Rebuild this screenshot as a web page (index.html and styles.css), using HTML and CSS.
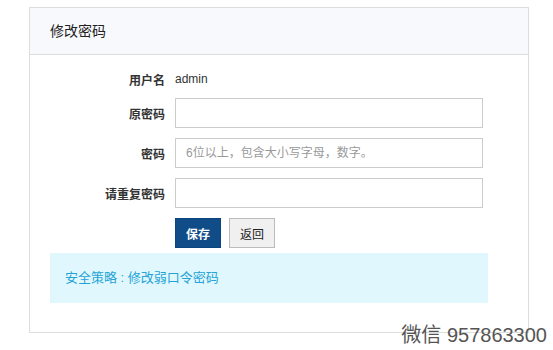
FILE: index.html
```html
<!DOCTYPE html>
<html lang="zh-CN">
  <head>
    <meta charset="UTF-8" />
    <title>修改密码</title>
    <link rel="stylesheet" href="styles.css">
  </head>
  <body>
    <div class="panel">
      <div class="panel-header">修改密码</div>
      <div class="panel-body">
        <div class="form-row static">
          <label class="form-label">用户名</label>
          <span class="form-value">admin</span>
        </div>
        <div class="form-row">
          <label class="form-label">原密码</label>
          <input class="form-input" type="password" />
        </div>
        <div class="form-row">
          <label class="form-label">密码</label>
          <input class="form-input" type="password" placeholder="6位以上，包含大小写字母，数字。" />
        </div>
        <div class="form-row">
          <label class="form-label">请重复密码</label>
          <input class="form-input" type="password" />
        </div>
        <div class="form-row actions">
          <span class="form-label"></span>
          <button class="btn btn-primary">保存</button>
          <button class="btn btn-default">返回</button>
        </div>
        <div class="notice">安全策略 : 修改弱口令密码</div>
      </div>
    </div>
    <div class="watermark">微信 957863300</div>
  </body>
</html>
```

FILE: styles.css
```css
* {
  margin: 0;
  padding: 0;
  box-sizing: border-box;
}

body {
  font-family: "Liberation Sans", "Noto Sans CJK SC", sans-serif;
  font-size: 12px;
  color: #333;
  background: #fff;
  padding: 7px 0 0 29px;
  height: 350px;
  position: relative;
  overflow: hidden;
}

.panel {
  width: 500px;
  border: 1px solid #ddd;
  background: #fff;
}

.panel-header {
  height: 47px;
  line-height: 46px;
  padding-left: 20px;
  font-size: 14px;
  color: #222;
  background: #f8f9fc;
  border-bottom: 1px solid #ddd;
}

.panel-body {
  padding: 14px 0 29px 20px;
}

.form-row {
  display: flex;
  align-items: center;
  height: 30px;
  margin-bottom: 10px;
}

.form-row.static {
  height: 20px;
  margin-bottom: 9px;
}

.form-label {
  width: 115px;
  margin-right: 10px;
  text-align: right;
  font-weight: 700;
  color: #333;
}

.form-value {
  color: #333;
}

.form-input {
  width: 308px;
  height: 30px;
  border: 1px solid #ccc;
  padding: 0 10px;
  font-family: inherit;
  font-size: 12px;
  color: #333;
  outline: none;
}

.form-input::placeholder {
  color: #999;
}

.actions {
  gap: 8px;
  margin-bottom: 5px;
}

.actions .form-label {
  margin-right: 2px;
}

.btn {
  width: 46px;
  height: 30px;
  font-family: inherit;
  font-size: 12px;
  cursor: pointer;
}

.btn-primary {
  background: #0f4c88;
  border: 1px solid #0c4480;
  color: #fff;
  font-weight: 700;
}

.btn-default {
  background: #f0f0f0;
  border: 1px solid #bbb;
  color: #222;
}

.notice {
  width: 438px;
  height: 50px;
  line-height: 50px;
  padding-left: 15px;
  background: #e0f8fd;
  color: #25a3d6;
  font-size: 13px;
}

.watermark {
  position: absolute;
  right: 6px;
  bottom: 2px;
  font-size: 20px;
  color: #555;
}
```
